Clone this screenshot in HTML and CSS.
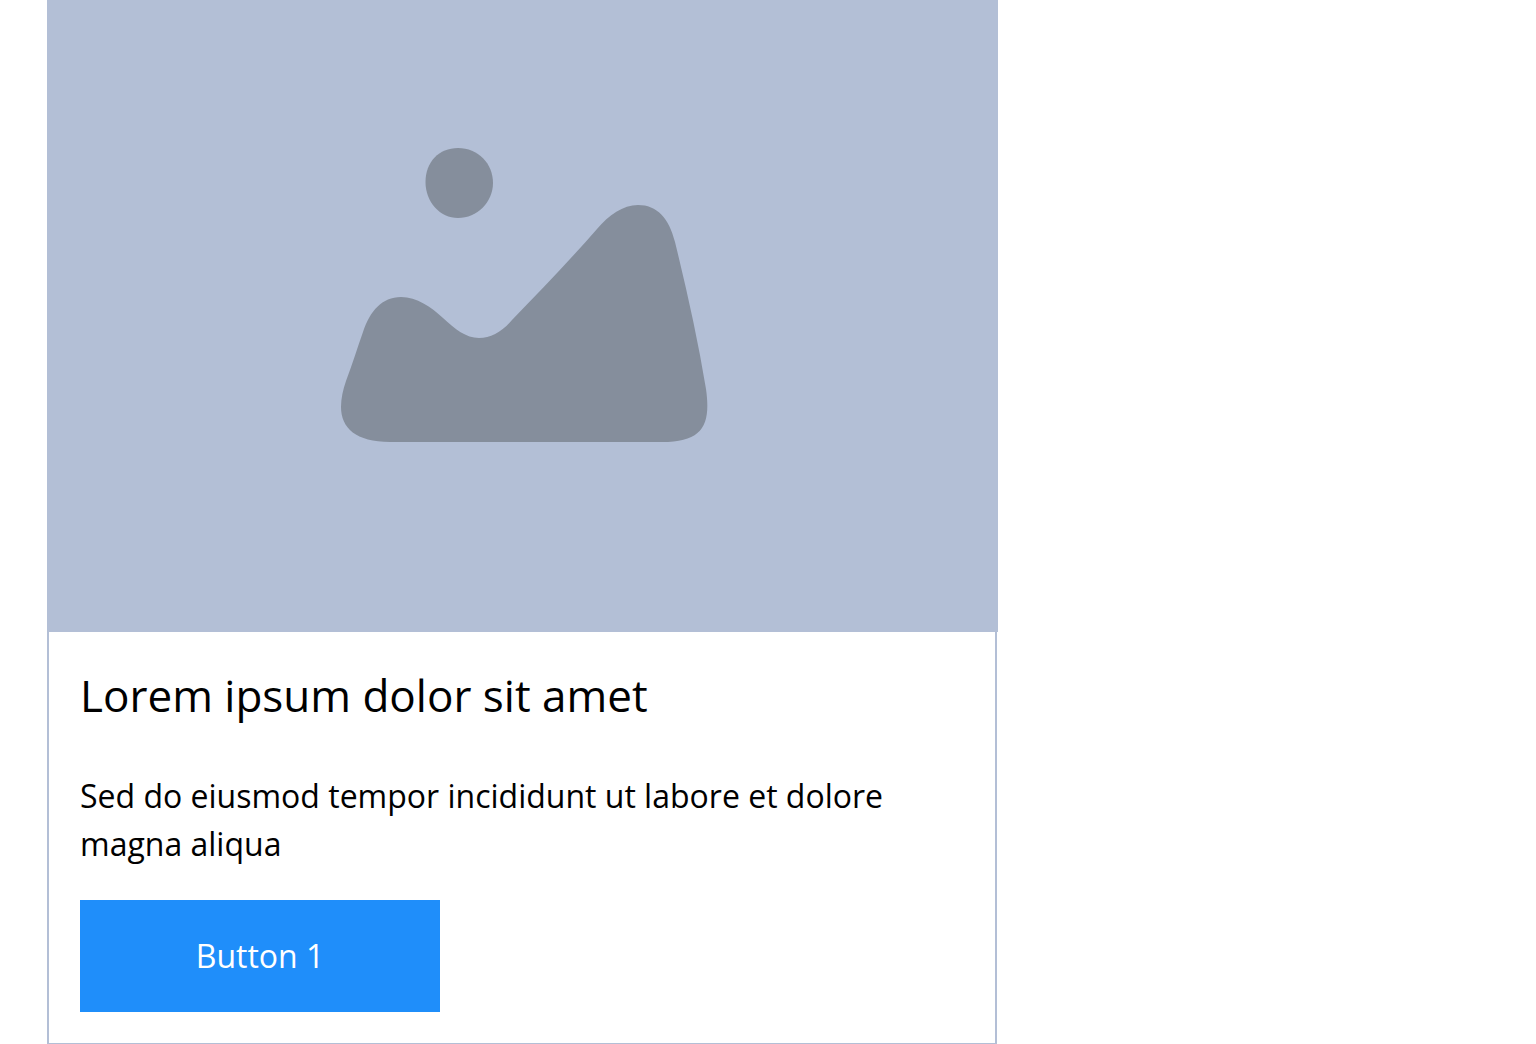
FILE: index.html
```
<!DOCTYPE html>
<html lang="en">
<head>
    <meta charset="utf-8">
    <title>Card</title>
    <link rel="stylesheet" href="styles.css">
</head>
<body>
    <article class="card">
        <svg class="card-image" viewBox="0 0 951 632" role="img" aria-label="Placeholder image">
            <path d="M411 148C431 148 446 163.500 446 183C446 202 430 218 411 218C393 218 378.500 202 378.500 182C378.500 162 392 148 411 148Z" />
            <path d="M299 381C305 365 310 349 316 332C323 311 335 297 354 297C370 297 384 307 396 318C408 329 419 338 432 338C444 338 455 332 465 320C494 290 522 261 550 229C562 215 576 205 591 205C610 205 622 218 628 242C640 291 651 340 659 389C664 425 656 442 615 442H343C309 442 294 428 294 407C294 398 296 390 299 381Z" />
        </svg>
        <div class="card-body">
            <h1>Lorem ipsum dolor sit amet</h1>
            <p>Sed do eiusmod tempor incididunt ut labore et dolore magna aliqua</p>
            <button type="button">Button 1</button>
        </div>
    </article>
</body>
</html>
```
FILE: styles.css
```
body {
    font-family: "Open Sans", sans-serif;
    margin: 0;
    padding: 0 47px;
    background: #fff;
    color: #000;
}

.card {
    box-sizing: border-box;
    max-width: 950px;
    border: 2px solid #b3bfd6;
    border-top: 0;
    border-bottom-width: 1px;
}

/* image covers the side borders */
.card-image {
    display: block;
    width: calc(100% + 5px);
    margin-left: -2px;
    background: #b3bfd6;
    fill: #858e9c;
}

.card-body {
    padding: 32px 31px 31px;
}

h1 {
    margin: 0 0 46px;
    font-size: 44px;
    line-height: 62px;
    font-weight: 400;
}

p {
    margin: 0 0 32px;
    font-size: 32px;
    line-height: 48px;
}

button {
    display: block;
    width: 360px;
    max-width: 100%;
    padding: 32px;
    border: 0;
    background: #1f8efa;
    color: #fff;
    font-family: inherit;
    font-size: 32px;
    line-height: 48px;
    cursor: pointer;
}
```
